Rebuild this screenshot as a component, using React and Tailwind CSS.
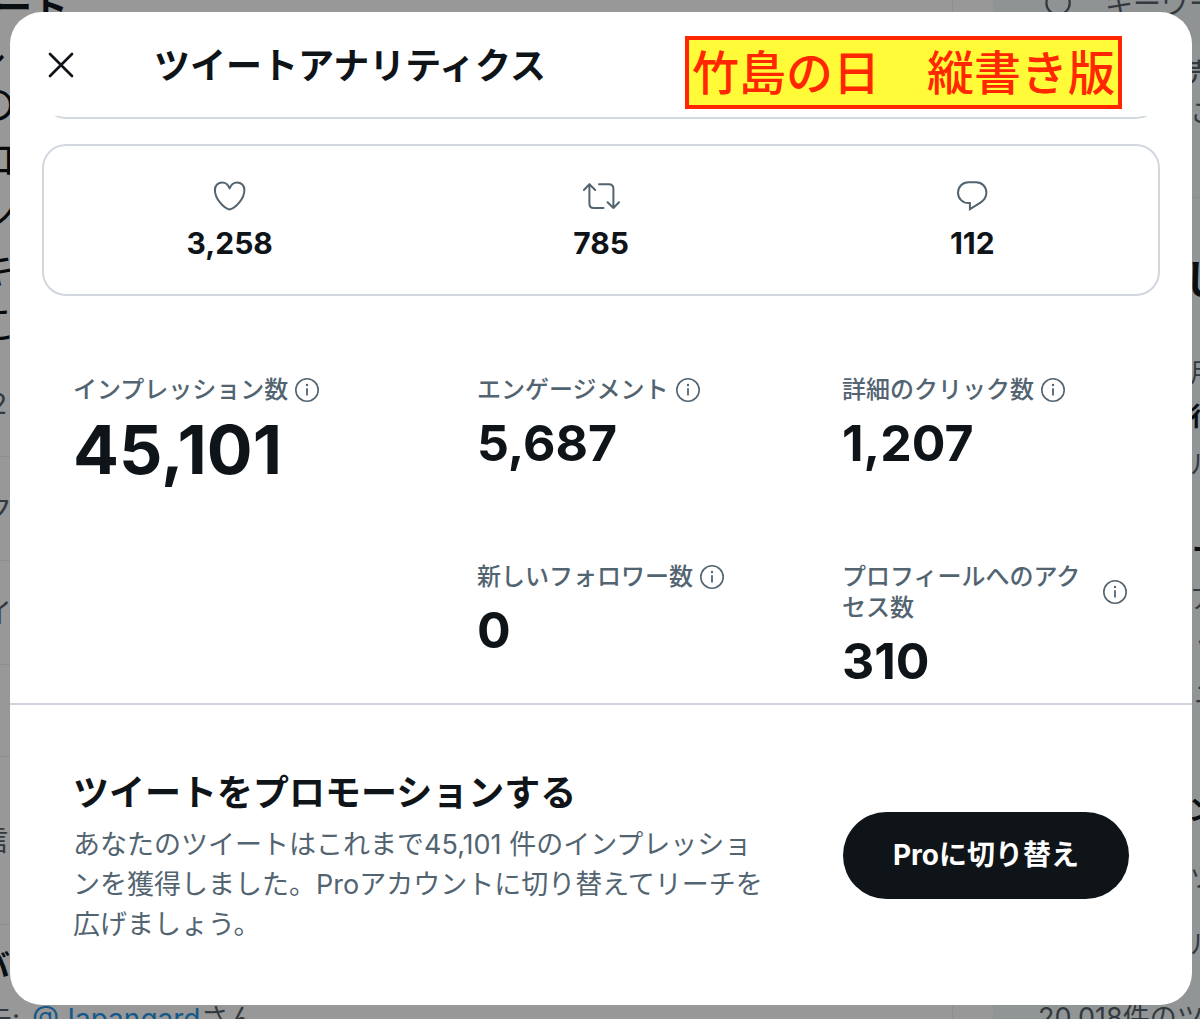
import React from "react";

const iconProps = {
  fill: "none",
  stroke: "currentColor",
  strokeWidth: 2,
  strokeLinecap: "round",
  strokeLinejoin: "round",
  "aria-hidden": true,
};

function HeartIcon() {
  return (
    <svg viewBox="0 0 38 38" className="size-[38px]" {...iconProps}>
      <path d="M18.6 11.4C17.1 7.4 14.3 5.4 11.3 5.4C7 5.4 3.9 8.6 3.9 13C3.9 21.5 12.4 31.2 18.6 32.6C24.8 31.2 33.4 21.5 33.4 13C33.4 8.6 30.3 5.4 26 5.4C23 5.4 20.1 7.4 18.6 11.4z" />
    </svg>
  );
}

function RetweetIcon() {
  return (
    <svg viewBox="0 0 38 38" className="size-[38px]" {...iconProps}>
      <path d="M1.9 13L7.4 7.2L13.2 13M7.4 7.2V26.5C7.4 29.2 9 31 11.8 31H21.5" />
      <path d="M17 7.2H26.8C29.6 7.2 31.4 9 31.4 11.7V31M25.6 25.3L31.4 31L37 25.3" />
    </svg>
  );
}

function ReplyIcon() {
  return (
    <svg viewBox="0 0 38 38" className="size-[38px]" {...iconProps} strokeLinejoin="miter">
      <path d="M15.5 5.2H23C29 5.2 33.4 9.8 33.4 15.6C33.4 19.8 31 23.3 27.5 25.6L16.9 32.2V26.1H15.8C9.5 26.1 5 21.6 5 15.7C5 9.8 9.6 5.2 15.5 5.2z" />
    </svg>
  );
}

function InfoIcon() {
  return (
    <svg viewBox="0 0 26 26" className="size-[26px]" {...iconProps} strokeWidth={1.6}>
      <circle cx="13" cy="13" r="11.2" />
      <path d="M13 11.2V18.4" strokeLinecap="butt" strokeWidth={1.8} />
      <circle cx="13" cy="8" r="1.2" fill="currentColor" stroke="none" />
    </svg>
  );
}

function Engagement({ icon, value, label }) {
  return (
    <div className="flex flex-col items-center" aria-label={label}>
      <span className="text-[#536471]">{icon}</span>
      <span className="mt-2 text-3xl leading-10 font-bold">{value}</span>
    </div>
  );
}

function Metric({ label, value, large, className = "" }) {
  return (
    <div className={className}>
      <div className="flex items-center gap-1.5 text-2xl leading-[31px] font-medium text-[#536471]">
        <span>{label}</span>
        <button type="button" className="shrink-0" aria-label={label + "の説明"}>
          <InfoIcon />
        </button>
      </div>
      <p
        className={
          large
            ? "mt-2 text-[68px] leading-[72px] font-bold"
            : "mt-2 text-[50px] leading-[60px] font-bold"
        }
      >
        {value}
      </p>
    </div>
  );
}

function Backdrop() {
  const line = "flex h-[55px] items-center text-[40px] text-[#07090b]";
  const trend = "flex items-center border-b border-[#8c8e90] text-[28px] text-[#32393f]";
  const side = "flex items-center justify-end text-[26px] text-[#32393f]";
  const sideBold = "flex items-center justify-end font-bold text-[#0a0e11]";
  return (
    <div className="absolute inset-0 flex overflow-hidden whitespace-nowrap" aria-hidden="true">
      <div className="min-w-0 flex-1 border-r border-[#8c8e90]">
        <div className="-ml-1 mb-1.5 flex h-4 items-center text-4xl font-bold text-[#0a0e11]">ート</div>
        <div className={line + " -ml-8"}>し</div>
        <div className={line + " -ml-6"}>の</div>
        <div className={line + " -ml-6"}>ロ</div>
        <div className={line + " -ml-6"}>ン</div>
        <div className={line + " -ml-6"}>キ</div>
        <div className={line + " -ml-6"}>こ</div>
        <div className={trend + " h-[105px]"}>
          <span className="-ml-2.5">2</span>
        </div>
        <div className={trend + " h-[104px]"}>
          <span className="-ml-4">ク</span>
        </div>
        <div className={trend + " h-[104px]"}>
          <span className="-ml-4">イ</span>
        </div>
        <div className={trend + " h-[92px]"} />
        <div className={trend + " h-[168px]"}>
          <span className="-ml-5">信</span>
        </div>
        <div className="-ml-5 flex h-20 items-center text-[30px] font-bold text-[#0a0e11]">バ</div>
        <div className="-ml-4 flex h-7 items-center text-[28px] text-[#32393f]">
          先:&nbsp;<span className="ml-1 text-[#15598a]">@Japangard</span>さん
        </div>
      </div>
      <div className="flex w-[247px] flex-col">
        <div className="flex h-11 shrink-0 items-center pl-10">
          <div className="flex h-11 flex-1 items-center bg-[#8f9393] pl-[52px] text-[#32393f]">
            <svg viewBox="0 0 30 30" className="-mt-9 size-7" {...iconProps} strokeWidth={2.4}>
              <circle cx="14" cy="14" r="12.5" />
            </svg>
            <span className="-mt-9 ml-8 text-[28px]">キーワード</span>
          </div>
        </div>
        <div className="ml-10 flex-1 bg-[#929595]">
          <div className={side + " -mr-3 h-14 font-medium"}>売</div>
          <div className={side + " -mr-4 h-6"}>こ</div>
          <div className="h-[74px] border-b border-[#8a8d8e]" />
          <div className={sideBold + " -mr-6 h-[164px] text-[40px]"}>し</div>
          <div className={side + " -mr-4 h-5"}>用</div>
          <div className={sideBold + " -mr-4 h-[68px] text-[26px]"}>行</div>
          <div className={side + " -mr-4 h-7"}>ル</div>
          <div className={sideBold + " -mr-5 h-36 text-[28px]"}>ー</div>
          <div className={side + " -mt-12 -mr-4 h-12"}>ア</div>
          <div className={side + " -mr-5 h-11"}>ッ</div>
          <div className={side + " -mr-5 h-14"}>ニ</div>
          <div className={sideBold + " -mr-4 h-44 text-[28px]"}>ン</div>
          <div className={side + " -mt-14 -mr-4 h-[70px]"}>ツ</div>
          <div className={side + " -mr-4 h-16"}>ル</div>
          <div className="mt-7 pl-[45px] text-[27px] leading-7 text-[#32393f]">20,018件のツイート</div>
        </div>
      </div>
    </div>
  );
}

export default function App() {
  return (
    <div className="relative flex min-h-screen flex-col overflow-hidden bg-[#989898] pt-3 pr-2 pb-3.5 pl-2.5 font-['Inter','Noto_Sans_CJK_JP',sans-serif] text-[#0f1419]">
      <Backdrop />
      <main
        role="dialog"
        aria-labelledby="dialog-title"
        className="relative flex flex-1 flex-col overflow-hidden rounded-[32px] bg-white"
      >
        <header className="flex h-[104px] items-start pr-[70px] pl-[38px]">
          <button type="button" aria-label="閉じる" className="mt-10">
            <svg viewBox="0 0 26 26" className="size-[26px]" {...iconProps} strokeWidth={2.7}>
              <path d="M2 2L24 24M24 2L2 24" />
            </svg>
          </button>
          <h1 id="dialog-title" className="mt-[30px] ml-20 text-4xl leading-[48px] font-bold">
            ツイートアナリティクス
          </h1>
          <p className="mt-6 ml-auto border-4 border-[#ff2600] bg-[#fffb38] px-[3px] text-[47px] leading-[65px] font-medium whitespace-nowrap text-[#ff2600]">
            竹島の日　縦書き版
          </p>
        </header>

        <div className="flex h-[3px] items-end overflow-hidden px-8">
          <div className="h-14 flex-1 rounded-3xl border-2 border-[#cfd9de]" />
        </div>

        <section className="mx-8 mt-[25px] grid grid-cols-3 rounded-3xl border-2 border-[#d2d7de] pt-[31px] pb-[31px]">
          <Engagement label="いいね" icon={<HeartIcon />} value="3,258" />
          <Engagement label="リツイート" icon={<RetweetIcon />} value="785" />
          <Engagement label="返信" icon={<ReplyIcon />} value="112" />
        </section>

        <section className="mt-[78px] grid grid-cols-[404fr_365fr_286fr] gap-y-[76px] pr-16 pb-3 pl-[63px]">
          <Metric label="インプレッション数" value="45,101" large />
          <Metric label="エンゲージメント" value="5,687" />
          <Metric label="詳細のクリック数" value="1,207" />
          <Metric label="新しいフォロワー数" value="0" className="col-start-2" />
          <Metric label="プロフィールへのアクセス数" value="310" />
        </section>

        <footer className="flex flex-1 items-center justify-between border-t-2 border-[#cfd3dd] pr-[63px] pl-[63px]">
          <div className="w-[704px] pt-1">
            <h2 className="text-4xl leading-[48px] font-bold">ツイートをプロモーションする</h2>
            <p className="mt-2 text-[27px] leading-10 text-[#536471]">
              あなたのツイートはこれまで45,101 件のインプレッションを獲得しました。Proアカウントに切り替えてリーチを広げましょう。
            </p>
          </div>
          <button
            type="button"
            className="h-[87px] rounded-full bg-[#0f1419] px-[50px] text-[28px] font-bold whitespace-nowrap text-white"
          >
            Proに切り替え
          </button>
        </footer>
      </main>
    </div>
  );
}
